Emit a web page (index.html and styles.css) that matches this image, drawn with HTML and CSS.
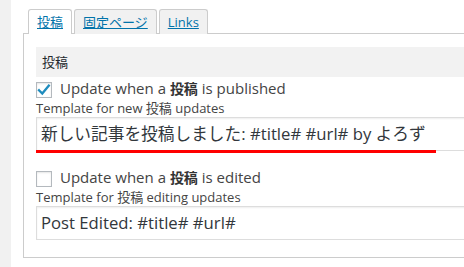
FILE: index.html
```html
<!DOCTYPE html>
<html lang="ja">
<head>
<meta charset="utf-8">
<title>Settings</title>
<link rel="stylesheet" href="styles.css">
</head>
<body>
<div class="page">
  <div class="tabs">
    <div class="tab active"><a href="#">投稿</a></div>
    <div class="tab"><a href="#">固定ページ</a></div>
    <div class="tab"><a href="#">Links</a></div>
  </div>
  <div class="panel">
    <div class="head">投稿</div>

    <div class="check-row">
      <span class="checkbox checked">
        <svg width="14" height="14" viewBox="0 0 14 14"><path d="M2 7.2 L5.3 10.6 L11.8 2.6" fill="none" stroke="#1e8cbe" stroke-width="2.3" stroke-linecap="square"/></svg>
      </span>
      <span class="check-label">Update when a <b>投稿</b> is published</span>
    </div>
    <div class="tpl-label">Template for new 投稿 updates</div>
    <div class="field-wrap">
      <div class="field">新しい記事を投稿しました: #title# #url# by よろず</div>
      <span class="mark"></span>
    </div>

    <div class="check-row second">
      <span class="checkbox"></span>
      <span class="check-label">Update when a <b>投稿</b> is edited</span>
    </div>
    <div class="tpl-label">Template for 投稿 editing updates</div>
    <div class="field-wrap">
      <div class="field">Post Edited: #title# #url#</div>
    </div>
  </div>
</div>
</body>
</html>
```

FILE: styles.css
```css
html, body {
  margin: 0;
  padding: 0;
}
body {
  background: #f1f1f1;
  overflow: hidden;
  width: 464px;
  height: 267px;
  font-family: "Open Sans", "Noto Sans CJK JP", sans-serif;
  font-size: 13px;
  color: #444;
}
.page {
  margin-left: 11px;
  background: #fff;
  height: 267px;
  padding: 9px 0 0 12px;
  box-sizing: border-box;
}
.tabs {
  display: flex;
  gap: 2px;
  padding-left: 5px;
}
.tab {
  position: relative;
  border: 1px solid #ccc;
  border-bottom: none;
  border-radius: 3px 3px 0 0;
  background: #f1f1f1;
  padding: 0 8px;
  height: 24px;
  line-height: 24px;
  margin-bottom: -1px;
}
.tab.active {
  background: #fff;
  z-index: 1;
}
.tab a {
  color: #0073aa;
  text-decoration: underline;
}
.panel {
  border: 1px solid #ccc;
  width: 480px;
  height: 225px;
  box-sizing: border-box;
  padding: 13px 0 0 12px;
}
.head {
  height: 30px;
  line-height: 30px;
  background: #f2f2f2;
  padding-left: 6px;
  color: #23282d;
}
.check-row {
  display: flex;
  align-items: flex-start;
  height: 20px;
  margin-top: 4px;
}
.check-row.second {
  margin-top: 19px;
}
.checkbox {
  box-sizing: border-box;
  width: 16px;
  height: 16px;
  margin-top: 1px;
  margin-right: 8px;
  border: 1px solid #b4b9be;
  background: #fff;
  box-shadow: inset 0 1px 2px rgba(0,0,0,0.1);
  display: flex;
  align-items: center;
  justify-content: center;
}
.check-label {
  font-size: 15px;
  line-height: 14px;
  color: #444;
  white-space: nowrap;
}
.check-label b {
  font-weight: 700;
  font-size: 14px;
  color: #333;
}
.tpl-label {
  line-height: 14px;
  margin-bottom: 2px;
}
.field-wrap {
  position: relative;
}
.field {
  box-sizing: border-box;
  height: 34px;
  line-height: 32px;
  border: 1px solid #ddd;
  box-shadow: inset 0 1px 2px rgba(0,0,0,0.07);
  padding-left: 4px;
  font-size: 16.7px;
  color: #32373c;
  white-space: nowrap;
}
.mark {
  position: absolute;
  left: 0;
  bottom: -2px;
  width: 400px;
  height: 3px;
  background: #f00;
}
```
